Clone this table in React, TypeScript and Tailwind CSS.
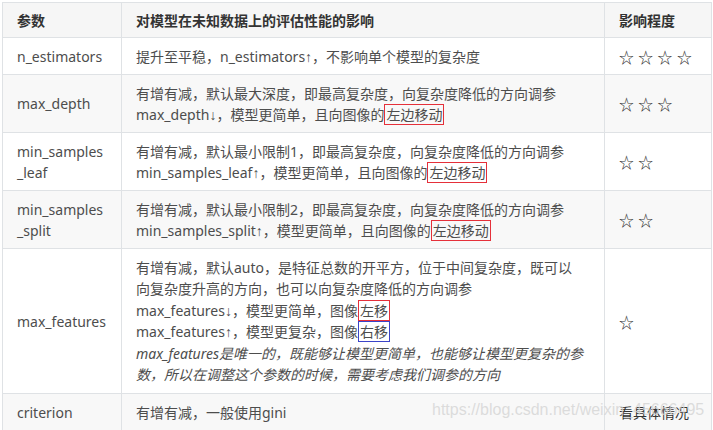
import type { ReactNode } from "react";

const Red = ({ children }: { children: ReactNode }) => (
  <span className="border-[1.5px] border-[#e5303a] px-px">{children}</span>
);

const Blue = ({ children }: { children: ReactNode }) => (
  <span className="border-[1.5px] border-[#3b44c8] px-px">{children}</span>
);

// narrow arrow glyph, like the one in the screenshot
const Ar = ({ c }: { c: string }) => <span className="font-['Liberation_Sans',sans-serif]">{c}</span>;

type Row = { name: ReactNode; lines: ReactNode[]; level: string; tall?: boolean };

const rows: Row[] = [
  {
    name: "n_estimators",
    lines: [<>提升至平稳，n_estimators<Ar c="↑" />，不影响单个模型的复杂度</>],
    level: "☆☆☆☆",
  },
  {
    name: "max_depth",
    lines: [
      "有增有减，默认最大深度，即最高复杂度，向复杂度降低的方向调参",
      <>max_depth<Ar c="↓" />，模型更简单，且向图像的<Red>左边移动</Red></>,
    ],
    level: "☆☆☆",
  },
  {
    name: (
      <>
        <div className="h-[21px]">min_samples</div>
        <div className="h-[21px]">_leaf</div>
      </>
    ),
    lines: [
      "有增有减，默认最小限制1，即最高复杂度，向复杂度降低的方向调参",
      <>min_samples_leaf<Ar c="↑" />，模型更简单，且向图像的<Red>左边移动</Red></>,
    ],
    level: "☆☆",
  },
  {
    name: (
      <>
        <div className="h-[21px]">min_samples</div>
        <div className="h-[21px]">_split</div>
      </>
    ),
    lines: [
      "有增有减，默认最小限制2，即最高复杂度，向复杂度降低的方向调参",
      <>min_samples_split<Ar c="↑" />，模型更简单，且向图像的<Red>左边移动</Red></>,
    ],
    level: "☆☆",
  },
  {
    name: "max_features",
    lines: [
      "有增有减，默认auto，是特征总数的开平方，位于中间复杂度，既可以",
      "向复杂度升高的方向，也可以向复杂度降低的方向调参",
      <>max_features<Ar c="↓" />，模型更简单，图像<Red>左移</Red></>,
      <>max_features<Ar c="↑" />，模型更复杂，图像<Blue>右移</Blue></>,
      <i>max_features是唯一的，既能够让模型更简单，也能够让模型更复杂的参</i>,
      <i>数，所以在调整这个参数的时候，需要考虑我们调参的方向</i>,
    ],
    level: "☆",
    tall: true,
  },
  {
    name: "criterion",
    lines: ["有增有减，一般使用gini"],
    level: "看具体情况",
  },
];

const cell = "border border-[#dfe2e5] px-[14px] py-[7.5px] align-middle";

export default function App() {
  return (
    <div className="relative h-[430px] w-[713px] overflow-hidden bg-white pl-[2px] pt-[2px] font-['Noto_Sans','Noto_Sans_CJK_SC',sans-serif] text-[14px] leading-[21px] text-[#4d4d4d]">
      <table className="w-[709px] table-fixed border-collapse">
        <colgroup>
          <col className="w-[119px]" />
          <col className="w-[483px]" />
          <col className="w-[107px]" />
        </colgroup>
        <thead>
          <tr className="bg-[#f6f6f6] text-[#333]">
            <th className="border border-[#dfe2e5] px-[14px] py-[6.5px] text-left font-bold">
              <div className="h-[21px]">参数</div>
            </th>
            <th className="border border-[#dfe2e5] px-[14px] py-[6.5px] text-left font-bold">
              <div className="h-[21px]">对模型在未知数据上的评估性能的影响</div>
            </th>
            <th className="border border-[#dfe2e5] px-[14px] py-[6.5px] text-left font-bold">
              <div className="h-[21px]">影响程度</div>
            </th>
          </tr>
        </thead>
        <tbody>
          {rows.map((r, i) => (
            <tr key={i} className={i % 2 === 1 ? "bg-[#f8f8f8]" : "bg-white"}>
              <td className={cell}>{typeof r.name === "string" ? <div className="h-[21px]">{r.name}</div> : r.name}</td>
              <td className={`${cell} whitespace-nowrap`}>
                {r.lines.map((l, j) => (
                  <div key={j} className={r.tall ? "h-[21.5px]" : "h-[21px]"}>
                    {l}
                  </div>
                ))}
              </td>
              <td className={`${cell} text-[#333]`}>
                {r.level.startsWith("☆") ? (
                  <div className="h-[21px] font-['Noto_Sans_CJK_SC',sans-serif] text-[15px] tracking-[4.3px]">
                    {r.level}
                  </div>
                ) : (
                  <div className="h-[21px]">{r.level}</div>
                )}
              </td>
            </tr>
          ))}
        </tbody>
      </table>
      <div className="pointer-events-none absolute left-[432px] top-[400px] whitespace-nowrap font-['Liberation_Sans',sans-serif] text-[16px] leading-[20px] text-[#d4d4d4]/80">
        https://blog.csdn.net/weixin_45666495
      </div>
    </div>
  );
}
